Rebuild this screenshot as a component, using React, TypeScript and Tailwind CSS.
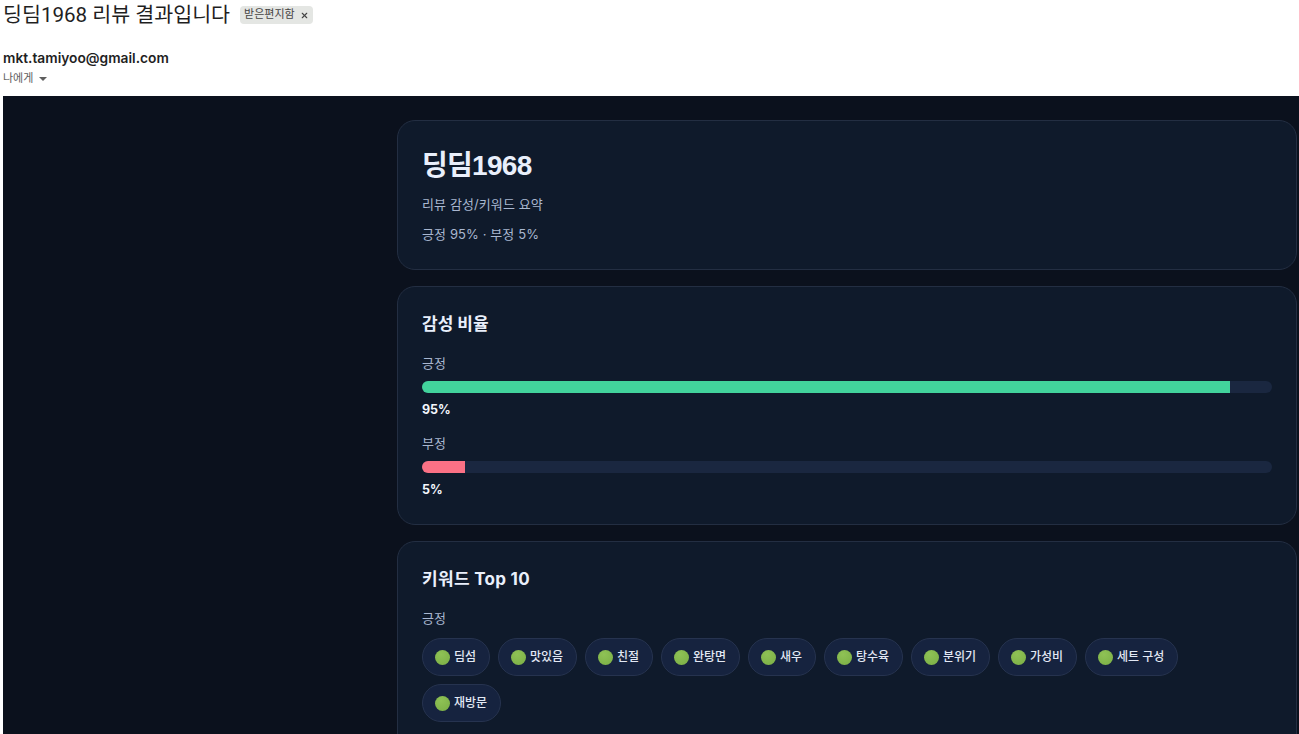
import React from 'react';
import { X } from 'lucide-react';

const keywords = ['딤섬', '맛있음', '친절', '완탕면', '새우', '탕수육', '분위기', '가성비', '세트 구성', '재방문'];

const Bar: React.FC<{ label: string; value: number; fill: string }> = ({ label, value, fill }) => (
  <div className="flex flex-col">
    <div className="text-[13px] leading-[20px] text-[#a9b7d0]">{label}</div>
    <div className="mt-2 h-3 rounded-full bg-[#1a2740] overflow-hidden">
      <div className={`h-full ${fill}`} style={{ width: `${value}%` }} />
    </div>
    <div className="mt-[7px] text-[12.5px] leading-[20px] font-bold text-[#f3f6fc]">{value}%</div>
  </div>
);

const Chip: React.FC<{ text: string }> = ({ text }) => (
  <div className="h-[38px] flex items-center gap-1 pl-3 pr-[12.9px] rounded-full bg-[#16233f] border border-[#26334f] text-xs font-medium text-[#e2e8f4]">
    <span className="w-[15px] h-[15px] rounded-full bg-[radial-gradient(circle_at_40%_30%,#8fc255,#7aae45)] shrink-0" />
    <span>{text}</span>
  </div>
);

export default function App() {
  return (
    <div className="w-[1299px] h-[734px] overflow-hidden bg-white font-['Roboto','Noto_Sans_CJK_KR',sans-serif]">
      {/* Mail header */}
      <div className="h-[96px] pl-[3px] pt-px flex flex-col">
        <div className="h-[28px] flex items-center gap-[10px]">
          <h1 className="text-[20.6px] leading-[28px] text-[#1f1f1f]">딩딤1968 리뷰 결과입니다</h1>
          <div className="h-[18px] flex items-center gap-[5px] px-1 rounded bg-[#e4e6e3] text-[11px] text-[#444]">
            <span>받은편지함</span>
            <X size={9} strokeWidth={3} className="text-[#444]" />
          </div>
        </div>
        <div className="mt-5 font-['Inter','Noto_Sans_CJK_KR',sans-serif] text-[13.75px] leading-[18px] font-semibold text-[#1f1f1f]">mkt.tamiyoo@gmail.com</div>
        <div className="mt-[3px] flex items-center gap-[6px] text-[11px] leading-[18px] text-[#5e5e5e]">
          <span>나에게</span>
          <span className="w-0 h-0 border-x-[4px] border-x-transparent border-t-[4px] border-t-[#5e5e5e]" />
        </div>
      </div>

      {/* Mail body */}
      <div className="ml-[3px] h-[638px] bg-[#0b111d] flex justify-end pr-[2px] pt-6 font-['Inter','Noto_Sans_CJK_KR',sans-serif]">
        <div className="w-[900px] flex flex-col gap-4">
          <section className="h-[150px] shrink-0 rounded-[18px] bg-[#0f1a2b] border border-[#232e42] px-6 pt-[25px]">
            <h2 className="font-['Liberation_Sans','Noto_Sans_CJK_KR',sans-serif] text-[28px] leading-[40px] font-bold tracking-[-0.7px] text-[#e9effb]">딩딤1968</h2>
            <p className="mt-2 text-[13px] leading-[20px] tracking-[0.1px] text-[#a9b7d0]">리뷰 감성/키워드 요약</p>
            <p className="mt-[10px] text-[13px] leading-[20px] tracking-[0.1px] text-[#a9b7d0]">긍정 95% · 부정 5%</p>
          </section>

          <section className="h-[239px] shrink-0 rounded-[18px] bg-[#0f1a2b] border border-[#232e42] px-6 pt-[25px]">
            <h3 className="text-[17px] leading-[25px] font-bold text-[#e9effb]">감성 비율</h3>
            <div className="mt-4 flex flex-col gap-[13px]">
              <Bar label="긍정" value={95} fill="bg-[#42d39c]" />
              <Bar label="부정" value={5} fill="bg-[#fb7185]" />
            </div>
          </section>

          <section className="h-[300px] shrink-0 rounded-[18px] bg-[#0f1a2b] border border-[#232e42] px-6 pt-[25px]">
            <h3 className="text-[17px] leading-[25px] font-bold tracking-[0.3px] text-[#e9effb]">키워드 Top 10</h3>
            <div className="mt-4 text-[13px] leading-[20px] text-[#a9b7d0]">긍정</div>
            <div className="mt-[10px] w-[800px] flex flex-wrap gap-2">
              {keywords.map((k) => (
                <Chip key={k} text={k} />
              ))}
            </div>
          </section>
        </div>
      </div>
    </div>
  );
}
